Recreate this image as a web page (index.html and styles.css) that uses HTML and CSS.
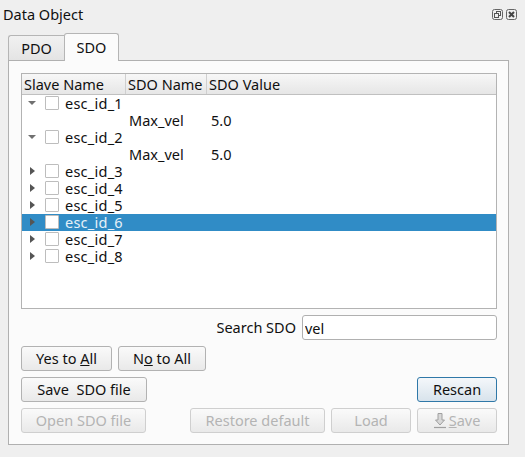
FILE: index.html
```html
<!DOCTYPE html>
<html lang="en">
<head>
<meta charset="utf-8">
<title>Data Object</title>
<link rel="stylesheet" href="styles.css">
</head>
<body>
<div class="dialog">
  <header class="titlebar">
    <span class="title">Data Object</span>
    <div class="dock-icons">
      <svg class="dock-icon" width="12" height="12" viewBox="0 0 12 12"><rect x="0.5" y="0.5" width="10" height="10" rx="2" fill="none" stroke="#666"/><rect x="4.5" y="2.5" width="4" height="4" fill="none" stroke="#555"/><rect x="2.5" y="4.5" width="4" height="4" fill="#efefef" stroke="#555"/></svg>
      <svg class="dock-icon" width="12" height="12" viewBox="0 0 12 12"><rect x="0.5" y="0.5" width="10" height="10" rx="2" fill="none" stroke="#666"/><path d="M3 3l5 5M8 3l-5 5" stroke="#444" stroke-width="2" fill="none"/></svg>
    </div>
  </header>
  <div class="tabs">
    <div class="tab">PDO</div>
    <div class="tab tab-active">SDO</div>
  </div>
  <section class="pane">
    <div class="tree">
      <div class="tree-head">
        <div class="head-cell">Slave Name</div>
        <div class="head-cell">SDO Name</div>
        <div class="head-cell">SDO Value</div>
      </div>
      <div class="tree-row"><div class="cell-main"><span class="arrow arrow-open"></span><span class="check"></span><span class="esc">esc_id_1</span></div></div>
      <div class="tree-row"><div class="cell-main"></div><div class="cell-name">Max_vel</div><div class="cell-value">5.0</div></div>
      <div class="tree-row"><div class="cell-main"><span class="arrow arrow-open"></span><span class="check"></span><span class="esc">esc_id_2</span></div></div>
      <div class="tree-row"><div class="cell-main"></div><div class="cell-name">Max_vel</div><div class="cell-value">5.0</div></div>
      <div class="tree-row"><div class="cell-main"><span class="arrow"></span><span class="check"></span><span class="esc">esc_id_3</span></div></div>
      <div class="tree-row"><div class="cell-main"><span class="arrow"></span><span class="check"></span><span class="esc">esc_id_4</span></div></div>
      <div class="tree-row"><div class="cell-main"><span class="arrow"></span><span class="check"></span><span class="esc">esc_id_5</span></div></div>
      <div class="tree-row selected"><div class="cell-main"><span class="arrow"></span><span class="check"></span><span class="esc">esc_id_6</span></div></div>
      <div class="tree-row"><div class="cell-main"><span class="arrow"></span><span class="check"></span><span class="esc">esc_id_7</span></div></div>
      <div class="tree-row"><div class="cell-main"><span class="arrow"></span><span class="check"></span><span class="esc">esc_id_8</span></div></div>
    </div>
    <div class="search-row">
      <label class="search-label" for="search">Search SDO</label>
      <input class="search-input" id="search" type="text" value="vel">
    </div>
    <div class="button-row row-yes">
      <button class="btn btn-yes">Yes to <u>A</u>ll</button>
      <button class="btn btn-no">N<u>o</u> to All</button>
    </div>
    <div class="button-row row-save">
      <button class="btn btn-save-file">Save&nbsp; SDO file</button>
      <button class="btn btn-side btn-default">Rescan</button>
    </div>
    <div class="button-row row-open">
      <button class="btn btn-open" disabled>Open SDO file</button>
      <button class="btn btn-restore" disabled>Restore default</button>
      <button class="btn btn-side" disabled>Load</button>
      <button class="btn btn-side btn-icon" disabled>
        <svg width="12" height="17" viewBox="0 0 12 17"><path d="M4 1.5h4v6.5h2.5L6 13 1.5 8H4z" fill="#d8d8d8" stroke="#a0a0a0"/><path d="M0 15.5h12" stroke="#a0a0a0" stroke-width="1.2"/></svg>
        <span><u>S</u>ave</span>
      </button>
    </div>
  </section>
</div>
</body>
</html>
```
FILE: styles.css
```css
* { box-sizing: border-box; }
html, body { margin: 0; padding: 0; }
body {
  width: 525px;
  height: 457px;
  background: #efefef;
  color: #101010;
  font-family: "Noto Sans", "Open Sans", sans-serif;
  font-size: 14.5px;
  overflow: hidden;
}
.dialog { padding: 0 16px 0 8px; }
.titlebar {
  height: 33px;
  margin-left: -5px;
  margin-right: -9px;
  display: flex;
  justify-content: space-between;
  align-items: flex-start;
}
.title { line-height: 29px; }
.dock-icons { display: flex; gap: 2px; padding-top: 9px; }
.dock-icon { display: block; }
.tabs { display: flex; height: 27px; align-items: flex-end; }
.tab {
  width: 56px;
  height: 25px;
  border: 1px solid #b5b5b5;
  border-bottom: 0;
  border-right: 0;
  border-radius: 3px 0 0 0;
  background: linear-gradient(#f1f1f1, #e4e4e4);
  text-align: center;
  line-height: 24px;
}
.tab-active {
  width: 55px;
  height: 28px;
  border-right: 1px solid #b5b5b5;
  border-radius: 3px 3px 0 0;
  background: #fbfbfb;
  margin-bottom: -1px;
  position: relative;
  line-height: 26px;
}
.pane {
  height: 385px;
  width: 501px;
  border: 1px solid #b0b0b0;
  background: #fbfbfb;
  padding: 12px 11px 0 12px;
}
.tree {
  height: 236px;
  border: 1px solid #b3b3b3;
  background: #fff;
}
.tree-head {
  display: grid;
  grid-template-columns: 104px 81px 1fr;
  height: 21px;
  background: linear-gradient(#f7f7f7, #e6e6e6);
  border-bottom: 1px solid #c0c0c0;
}
.head-cell {
  padding-left: 2px;
  line-height: 20px;
  border-right: 1px solid #cfcfcf;
}
.head-cell:last-child { border-right: 0; }
.tree-row {
  display: grid;
  grid-template-columns: 104px 81px 1fr;
  height: 17px;
  line-height: 17px;
}
.cell-main { display: flex; align-items: center; }
.cell-name { padding-left: 3px; }
.cell-value { padding-left: 4px; }
.esc { letter-spacing: 0.25px; }
.arrow {
  width: 0;
  height: 0;
  margin-left: 8px;
  margin-right: 10px;
  margin-bottom: 1px;
  border-style: solid;
  border-width: 4px 0 4px 5px;
  border-color: transparent transparent transparent #555;
}
.arrow-open {
  margin-left: 6px;
  margin-right: 9px;
  border-width: 4px 4px 0 4px;
  border-color: #707070 transparent transparent transparent;
}
.check {
  width: 14px;
  height: 14px;
  border: 1px solid #bdbdbd;
  border-radius: 1px;
  background: #fff;
  margin-right: 6px;
  margin-bottom: 1px;
}
.selected { background: #308cc6; color: #e6f1f8; }
.search-row {
  display: flex;
  justify-content: flex-end;
  align-items: center;
  margin-top: 6px;
  gap: 6px;
  height: 26px;
}
.search-label { margin-bottom: 2px; }
.search-input {
  width: 195px;
  height: 25px;
  margin-bottom: 1px;
  border: 1px solid #b0b0b0;
  border-radius: 3px;
  background: #fff;
  padding: 0 2px;
  font: inherit;
  color: inherit;
  outline: none;
}
.button-row { display: flex; height: 25px; gap: 6px; margin-top: 6px; }
.row-yes { margin-top: 5px; }
.btn {
  height: 25px;
  border: 1px solid #b2b2b2;
  border-radius: 3px;
  background: linear-gradient(#fafafa, #e9e9e9);
  font: inherit;
  color: inherit;
  padding: 0 0 1px;
}
.btn[disabled] { color: #b4b4b4; border-color: #cfcfcf; }
.btn-yes { width: 91px; }
.btn-no { width: 88px; }
.btn-save-file { width: 126px; margin-right: auto; }
.btn-open { width: 125px; margin-right: 38px; }
.btn-restore { width: 135px; }
.btn-side { width: 80px; }
.btn-default { border-color: #2f78a8; background: linear-gradient(#f4f7fa, #d8e3ec); }
.btn-icon { display: flex; align-items: center; justify-content: center; gap: 3px; }
```
